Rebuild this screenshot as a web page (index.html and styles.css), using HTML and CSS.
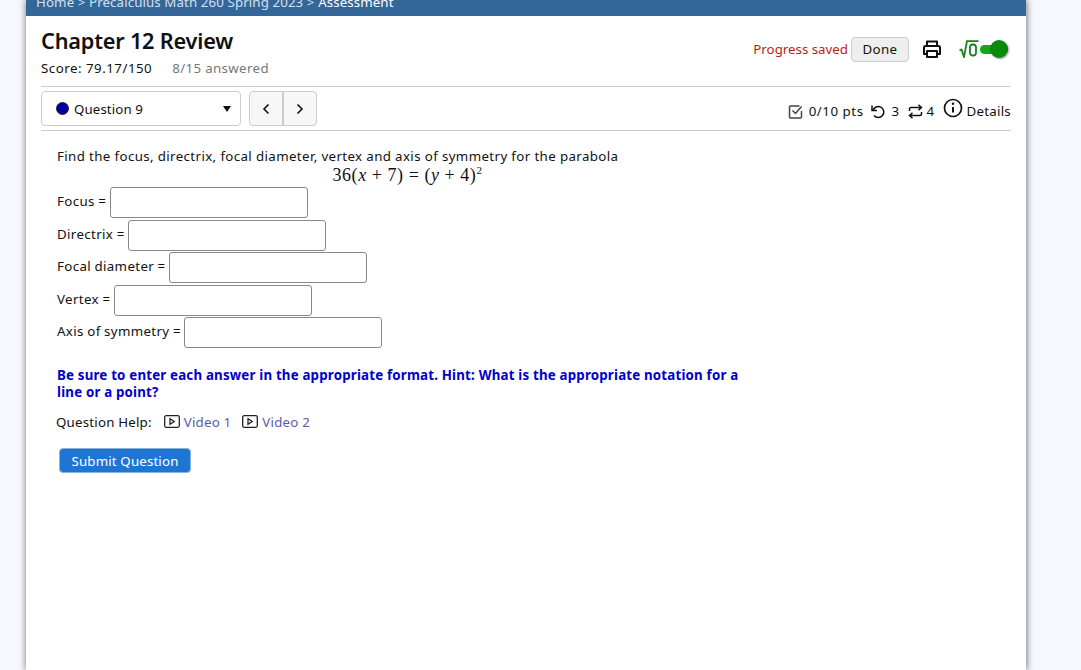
FILE: index.html
```html
<!DOCTYPE html>
<html lang="en">
<head>
<meta charset="utf-8">
<title>Chapter 12 Review</title>
<link rel="stylesheet" href="styles.css">
</head>
<body>
<div class="page">
  <nav class="crumbs"><span>Home &gt; Precalculus Math 260 Spring 2023 &gt; <b class="crumb-current">Assessment</b></span></nav>
  <div class="content">
    <header class="head">
      <div>
        <h1 class="title">Chapter 12 Review</h1>
        <div class="score"><span>Score: 79.17/150</span><span class="answered">8/15 answered</span></div>
      </div>
      <div class="head-actions">
        <span class="saved">Progress saved</span>
        <button class="done">Done</button>
        <svg class="print" width="20" height="20" viewBox="0 0 20 20" fill="none" stroke="#111" stroke-width="2" stroke-linejoin="round"><path d="M5 7V2.500h10V7"/><path d="M5 15H2V8.500Q2 7 3.500 7h13Q18 7 18 8.500V15h-3"/><rect x="5" y="12" width="10" height="6"/></svg>
        <span class="mathtoggle">
          <svg width="20" height="18" viewBox="0 0 20 18" fill="none" stroke="#17821a" stroke-width="1.800"><path d="M0.500 10.500 2.500 9.500 5 17 8 1.200H19.500"/><rect x="11" y="4.500" width="6" height="11" rx="2.800"/></svg>
          <span class="switch"><span class="knob"></span></span>
        </span>
      </div>
    </header>
    <div class="qbar">
      <div class="qselect"><span class="dot"></span><span class="qname">Question 9</span><span class="caret"></span></div>
      <div class="qnav">
        <button class="navbtn"><svg width="8" height="12" viewBox="0 0 8 12" fill="none" stroke="#111" stroke-width="1.600"><path d="M6.500 1.500 2 6l4.500 4.500"/></svg></button>
        <button class="navbtn"><svg width="8" height="12" viewBox="0 0 8 12" fill="none" stroke="#111" stroke-width="1.600"><path d="M1.500 1.500 6 6l-4.500 4.500"/></svg></button>
      </div>
      <div class="qmeta">
        <svg width="15" height="15" viewBox="0 0 15 15" fill="none" stroke="#444" stroke-width="1.500"><path d="M13.500 7v6a1 1 0 0 1-1 1h-10a1 1 0 0 1-1-1V3a1 1 0 0 1 1-1h9"/><path d="M4.500 6.500 7.500 9.500 13.500 2.500"/></svg>
        <span class="pts">0/10 pts</span>
        <svg class="m-retry" width="15" height="15" viewBox="0 0 15 15" fill="none" stroke="#111" stroke-width="1.500"><path d="M3 6.500A5.500 5.500 0 1 1 4 11.500"/><path d="M2 1.500V6.500H7"/></svg>
        <span class="retries">3</span>
        <svg class="m-gap" width="15" height="15" viewBox="0 0 15 15" fill="none" stroke="#111" stroke-width="1.500"><path d="M1.500 7V5a1.500 1.500 0 0 1 1.500-1.500H13.500M10.500 0.800 13.500 3.500 10.500 6.200"/><path d="M13.500 8v2a1.500 1.500 0 0 1-1.500 1.500H1.500M4.500 8.800 1.500 11.500 4.500 14.200"/></svg>
        <span>4</span>
        <svg class="m-info" width="20" height="20" viewBox="0 0 20 20" fill="none" stroke="#111" stroke-width="1.700"><circle cx="10" cy="10" r="8.500"/><path d="M10 9v5.500" stroke-width="2"/><circle cx="10" cy="5.800" r="1.200" fill="#111" stroke="none"/></svg>
        <span class="details">Details</span>
      </div>
    </div>
    <main class="question">
      <p class="prompt">Find the focus, directrix, focal diameter, vertex and axis of symmetry for the parabola</p>
      <div class="equation"><span>36(<i>x</i> + 7) = (<i>y</i> + 4)<sup>2</sup></span></div>
      <div class="fields">
        <label class="field">Focus = <input class="answer" type="text"></label>
        <label class="field">Directrix = <input class="answer" type="text"></label>
        <label class="field">Focal diameter = <input class="answer" type="text"></label>
        <label class="field">Vertex = <input class="answer" type="text"></label>
        <label class="field">Axis of symmetry = <input class="answer" type="text"></label>
      </div>
      <p class="hint">Be sure to enter each answer in the appropriate format. Hint: What is the appropriate notation for a line or a point?</p>
      <div class="help">
        <span class="help-label">Question Help:</span>
        <a class="video"><svg width="16" height="13" viewBox="0 0 16 13" fill="none" stroke="#222" stroke-width="1.300"><rect x="0.700" y="0.700" width="14.600" height="11.600" rx="1.500"/><path d="M6 3.800v5.400l4.200-2.700z"/></svg>Video 1</a>
        <a class="video"><svg width="16" height="13" viewBox="0 0 16 13" fill="none" stroke="#222" stroke-width="1.300"><rect x="0.700" y="0.700" width="14.600" height="11.600" rx="1.500"/><path d="M6 3.800v5.400l4.200-2.700z"/></svg>Video 2</a>
      </div>
      <button class="submit">Submit Question</button>
    </main>
  </div>
</div>
</body>
</html>
```
FILE: styles.css
```css
* { box-sizing: border-box; }
html, body { margin: 0; height: 100%; overflow: hidden; }
body {
  background: #f6f7ff;
  font-family: "Noto Sans", sans-serif;
  font-size: 13.300px;
  letter-spacing: .35px;
  color: #111;
}
.page {
  width: 1000px;
  height: 670px;
  margin-left: 26px;
  background: #fff;
  box-shadow: 2px 0 6px rgba(0,0,0,.35), -2px 0 6px rgba(0,0,0,.25);
}
.crumbs {
  height: 16px;
  background: #336699;
  color: #d5e0ee;
  padding-left: 10px;
  display: flex;
  align-items: flex-end;
  overflow: hidden;
  line-height: 18px;
  letter-spacing: .1px;
  white-space: nowrap;
}
.crumbs span { margin-bottom: 5px; }
.crumb-current { font-weight: 400; color: #fff; }
.content { padding: 0 15px; }
.head {
  display: flex;
  justify-content: space-between;
  height: 71px;
  border-bottom: 1px solid #ccc;
  padding-top: 11px;
}
.title { margin: 0; font-size: 21.700px; font-weight: 600; line-height: 28px; letter-spacing: -.2px; color: #111; }
.score { margin-top: 5px; line-height: 16px; display: flex; gap: 20px; letter-spacing: .5px; }
.answered { color: #777; letter-spacing: .35px; }
.head-actions { display: flex; align-items: center; height: 44px; }
.saved { color: #b81c1c; margin-right: 3px; letter-spacing: 0; }
.done {
  width: 58px; height: 25px; padding: 0;
  background: #eee; border: 1px solid #ccc; border-radius: 4px;
  font: inherit; letter-spacing: inherit; color: #111;
}
.print { margin-left: 13px; }
.mathtoggle { display: flex; align-items: center; margin-left: 17px; }
.switch { position: relative; width: 28px; height: 9px; background: #17a51a; border-radius: 5px; margin-left: 1px; margin-right: 3px; }
.knob { position: absolute; right: 0; top: -4.500px; width: 18px; height: 18px; border-radius: 50%; background: #0a8a0a; box-shadow: 1px 1px 2px rgba(0,0,0,.4); }
.qbar {
  display: flex;
  align-items: center;
  height: 44px;
  border-bottom: 1px solid #ccc;
}
.qselect {
  width: 200px; height: 35px;
  border: 1px solid #ccc; border-radius: 4px;
  display: flex; align-items: center;
  padding: 0 9px 0 14px;
  letter-spacing: .1px;
}
.dot { width: 13px; height: 13px; border-radius: 50%; background: #00009c; margin-right: 5px; border: 1px solid #223; }
.qname { flex: 1; }
.caret { width: 0; height: 0; border-left: 4.500px solid transparent; border-right: 4.500px solid transparent; border-top: 6px solid #111; }
.qnav { display: flex; margin-left: 8px; border: 1px solid #ccc; border-radius: 4px; height: 35px; width: 68px; background: #f7f7f7; overflow: hidden; }
.navbtn { flex: 1; border: 0; background: transparent; padding: 0; display: flex; align-items: center; justify-content: center; }
.navbtn + .navbtn { border-left: 2px solid #ccc; }
.qmeta { margin-left: auto; display: flex; align-items: center; gap: 4px; padding-top: 5px; }
.pts { letter-spacing: .55px; margin-left: 2px; }
.retries { margin-left: 3px; }
.m-gap { margin-left: 4px; }
.m-retry { margin-left: 2px; }
.m-info { margin-left: 4px; margin-bottom: 6px; }
.details { letter-spacing: .25px; }
.question { padding-left: 16px; }
.prompt { margin: 17px 0 0; line-height: 16px; letter-spacing: .375px; }
.equation { text-align: center; width: 701px; font-family: "Liberation Serif", serif; font-size: 18px; letter-spacing: .55px; line-height: 22px; }
.equation sup { font-size: 11px; line-height: 0; }
.fields { display: flex; flex-direction: column; margin-top: 1px; }
.field { display: flex; align-items: flex-start; height: 32.500px; line-height: 28px; white-space: pre; word-spacing: -.3px; }
.answer { width: 198px; height: 31px; border: 1px solid #888; border-radius: 3px; background: #fff; padding: 0; }
.hint { margin: 17px 0 0; width: 700px; font-weight: 700; color: #0000cc; line-height: 17px; letter-spacing: .19px; }
.help { display: flex; align-items: center; margin-top: 12px; margin-left: -1px; line-height: 18px; letter-spacing: .2px; }
.help-label { margin-right: 12px; }
.video { display: flex; align-items: center; gap: 4px; color: #5a5ab0; margin-right: 11px; }
.submit {
  display: block; margin: 17px 0 0 2px;
  width: 132px; height: 25px; padding: 1px 0 0;
  background: #1f76d2; color: #fff;
  border: 1px solid #8ab4e0; border-radius: 4px;
  font: inherit; letter-spacing: .15px;
}
```
